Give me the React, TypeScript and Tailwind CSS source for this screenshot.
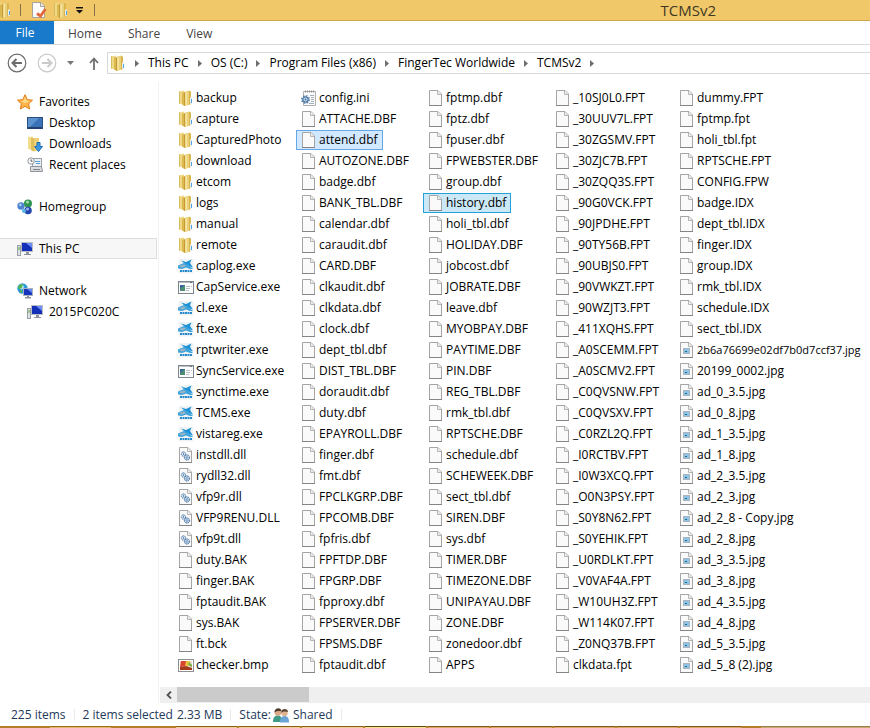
import React from "react";

type Kind = "folder" | "app" | "window" | "dll" | "file" | "bmp" | "ini" | "jpg";
type Entry = { name: string; kind: Kind; mark?: "selected" | "focused" };

const entries = (kind: Kind, names: string): Entry[] =>
  names.split("|").map((name) => ({ name, kind }));

const columns: Entry[][] = [
  [
    ...entries("folder", "backup|capture|CapturedPhoto|download|etcom|logs|manual|remote"),
    ...entries("app", "caplog.exe"),
    ...entries("window", "CapService.exe"),
    ...entries("app", "cl.exe|ft.exe|rptwriter.exe"),
    ...entries("window", "SyncService.exe"),
    ...entries("app", "synctime.exe|TCMS.exe|vistareg.exe"),
    ...entries("dll", "instdll.dll|rydll32.dll|vfp9r.dll|VFP9RENU.DLL|vfp9t.dll"),
    ...entries("file", "duty.BAK|finger.BAK|fptaudit.BAK|sys.BAK|ft.bck"),
    ...entries("bmp", "checker.bmp"),
  ],
  [
    ...entries("ini", "config.ini"),
    ...entries("file", "ATTACHE.DBF"),
    { name: "attend.dbf", kind: "file", mark: "selected" },
    ...entries(
      "file",
      "AUTOZONE.DBF|badge.dbf|BANK_TBL.DBF|calendar.dbf|caraudit.dbf|CARD.DBF|clkaudit.dbf|clkdata.dbf|clock.dbf|dept_tbl.dbf|DIST_TBL.DBF|doraudit.dbf|duty.dbf|EPAYROLL.DBF|finger.dbf|fmt.dbf|FPCLKGRP.DBF|FPCOMB.DBF|fpfris.dbf|FPFTDP.DBF|FPGRP.DBF|fpproxy.dbf|FPSERVER.DBF|FPSMS.DBF|fptaudit.dbf",
    ),
  ],
  [
    ...entries("file", "fptmp.dbf|fptz.dbf|fpuser.dbf|FPWEBSTER.DBF|group.dbf"),
    { name: "history.dbf", kind: "file", mark: "focused" },
    ...entries(
      "file",
      "holi_tbl.dbf|HOLIDAY.DBF|jobcost.dbf|JOBRATE.DBF|leave.dbf|MYOBPAY.DBF|PAYTIME.DBF|PIN.DBF|REG_TBL.DBF|rmk_tbl.dbf|RPTSCHE.DBF|schedule.dbf|SCHEWEEK.DBF|sect_tbl.dbf|SIREN.DBF|sys.dbf|TIMER.DBF|TIMEZONE.DBF|UNIPAYAU.DBF|ZONE.DBF|zonedoor.dbf|APPS",
    ),
  ],
  entries(
    "file",
    "_10SJ0L0.FPT|_30UUV7L.FPT|_30ZGSMV.FPT|_30ZJC7B.FPT|_30ZQQ3S.FPT|_90G0VCK.FPT|_90JPDHE.FPT|_90TY56B.FPT|_90UBJS0.FPT|_90VWKZT.FPT|_90WZJT3.FPT|_411XQHS.FPT|_A0SCEMM.FPT|_A0SCMV2.FPT|_C0QVSNW.FPT|_C0QVSXV.FPT|_C0RZL2Q.FPT|_I0RCTBV.FPT|_I0W3XCQ.FPT|_O0N3PSY.FPT|_S0Y8N62.FPT|_S0YEHIK.FPT|_U0RDLKT.FPT|_V0VAF4A.FPT|_W10UH3Z.FPT|_W114K07.FPT|_Z0NQ37B.FPT|clkdata.fpt",
  ),
  [
    ...entries(
      "file",
      "dummy.FPT|fptmp.fpt|holi_tbl.fpt|RPTSCHE.FPT|CONFIG.FPW|badge.IDX|dept_tbl.IDX|finger.IDX|group.IDX|rmk_tbl.IDX|schedule.IDX|sect_tbl.IDX",
    ),
    ...entries(
      "jpg",
      "2b6a76699e02df7b0d7ccf37.jpg|20199_0002.jpg|ad_0_3.5.jpg|ad_0_8.jpg|ad_1_3.5.jpg|ad_1_8.jpg|ad_2_3.5.jpg|ad_2_3.jpg|ad_2_8 - Copy.jpg|ad_2_8.jpg|ad_3_3.5.jpg|ad_3_8.jpg|ad_4_3.5.jpg|ad_4_8.jpg|ad_5_3.5.jpg|ad_5_8 (2).jpg",
    ),
  ],
];

function Svg({ children }: { children: React.ReactNode }) {
  return (
    <svg className="size-4 shrink-0" viewBox="0 0 16 16" aria-hidden="true">
      {children}
    </svg>
  );
}

function FolderIcon() {
  return (
    <Svg>
      <path d="M1 1.5 L6 0.5 V14.5 L1 13.5Z" fill="#efd984" />
      <path d="M1 1.5 L2 1.3 V13.7 L1 13.5Z" fill="#d8bb5c" />
      <path d="M4 2.5 H6.5 V16 L4 14.5Z" fill="#dcb950" />
      <path d="M6 2.5 L7 2 V16 L6 15.5Z" fill="#c59b36" />
      <path d="M7 1.5 L12 0.5 V14.5 L7 16Z" fill="#ead07a" />
      <path d="M7.5 2 L9 1.7 V14.8 L7.5 15.3Z" fill="#f5e5a0" />
      <path d="M11 1 L13 1.5 V14 L11 14.7Z" fill="#d9b54c" />
      <path d="M12 7.5 H14 V13.8 H12Z" fill="#e8eef0" />
      <path d="M13.5 9 V13" stroke="#4ea3e0" />
    </Svg>
  );
}

function Page() {
  return (
    <>
      <path d="M1.5 0.5 H10 L13.5 4 V15.5 H1.5Z" fill="#fafafa" stroke="#a5a5a5" />
      <path d="M1 15.5 H14" stroke="#858585" />
      <path d="M9.5 1 V4.5 H13" fill="#fff" stroke="#b5b5b5" />
      <path d="M10.5 1.5 L13 4 H10.5Z" fill="#e2e2e2" />
    </>
  );
}

function KindIcon({ kind }: { kind: Kind }) {
  if (kind === "folder") return <FolderIcon />;
  if (kind === "file")
    return (
      <Svg>
        <Page />
      </Svg>
    );
  if (kind === "jpg")
    return (
      <Svg>
        <Page />
        <rect x="4" y="6" width="7" height="6" fill="#a9b4bd" />
        <rect x="5" y="7" width="5" height="4" fill="#8ec4ea" />
        <path d="M6 9 H8 V10 H6Z" fill="#23687f" />
      </Svg>
    );
  if (kind === "dll")
    return (
      <Svg>
        <Page />
        <circle cx="5.5" cy="7" r="2.2" fill="#d8e6f2" stroke="#3d6d9e" strokeDasharray="1.2 0.6" />
        <circle cx="9" cy="10.5" r="2.6" fill="#c3d8ec" stroke="#2e5f93" strokeDasharray="1.3 0.6" />
        <circle cx="5.5" cy="7" r="0.7" fill="#2e5f93" />
        <circle cx="9" cy="10.5" r="0.9" fill="#fff" stroke="#2e5f93" strokeWidth="0.6" />
      </Svg>
    );
  if (kind === "ini")
    return (
      <Svg>
        <path d="M2.5 1.5 H14.5 V15.5 H2.5Z" fill="#fbfbfb" stroke="#b0b0b0" />
        <path d="M4 1.5 H14" stroke="#8c8c8c" strokeWidth="2" strokeDasharray="1 1" />
        <path d="M9 5.5 H13 M10 7.5 H13 M10 9.5 H13 M10 11.5 H13 M8 13.5 H13" stroke="#9fb0bf" />
        <circle cx="4.5" cy="9.5" r="3.7" fill="none" stroke="#5f89b0" strokeWidth="1.6" strokeDasharray="1.5 1.4" />
        <circle cx="4.5" cy="9.5" r="2.7" fill="#cfe0ef" stroke="#46749f" strokeWidth="1.2" />
        <circle cx="4.5" cy="9.5" r="1" fill="#46749f" />
      </Svg>
    );
  if (kind === "window")
    return (
      <Svg>
        <rect x="0.5" y="2.5" width="15" height="12" fill="#fdfdfd" stroke="#7d858e" />
        <path d="M1 3.5 H15" stroke="#b9c0c8" />
        <path d="M12 3.5 H14" stroke="#6f7780" />
        <rect x="2" y="6" width="5" height="6" fill="#4d8d74" />
        <path d="M2 6 H7 L2 10Z" fill="#35679c" />
        <path d="M8 7.5 H12 M8 9.5 H12 M8 11.5 H11 M13 7.5 H14" stroke="#b9bfc6" />
      </Svg>
    );
  if (kind === "bmp")
    return (
      <Svg>
        <rect x="0.5" y="2.5" width="15" height="12" fill="#fff" stroke="#8f8f8f" />
        <rect x="2" y="4" width="12" height="9" fill="#e9dccb" />
        <path d="M3 4 L9 4 L8 9 L2 10Z" fill="#d9432f" />
        <path d="M8 4 H12 L10 9 H7Z" fill="#eac23f" />
        <path d="M11 5 L14 8 V10 L10 8Z" fill="#79ad3e" />
        <path d="M2 10 L8 9 L14 11 V13 H2Z" fill="#a33a1e" />
      </Svg>
    );
  return (
    <Svg>
      <path d="M0.5 1 H15.5 V15.5 H0.5Z" fill="#f0f3f5" />
      <path d="M3 2.5 L8 4 L13.5 1.5 L12 5 L15 9.5 L9.5 7.5 L4 10 L7 6Z" fill="#1f92d6" />
      <path d="M0 7.5 L6 5 L10 6.5 L15 11 H12 L8 9.5 L4 11 L0 10.5Z" fill="#3fa4dc" />
      <path d="M1 8 L6 6.5 L8 8 L4 9.5Z" fill="#9fb4c2" />
      <path d="M2 13 H14" stroke="#2589cb" strokeWidth="2" strokeDasharray="2 0.5" />
    </Svg>
  );
}

function PcIcon() {
  return (
    <Svg>
      <rect x="4" y="1" width="12" height="10" fill="#b9bec6" />
      <rect x="5" y="2" width="10" height="8" fill="#1430b8" />
      <path d="M9 2 H15 V7Z" fill="#6d8df2" />
      <path d="M9 11 H12 V13 H14 V14 H7 V13 H9Z" fill="#8d949d" />
      <rect x="0.5" y="4.5" width="3" height="10" fill="#dfe3e6" stroke="#9aa0a6" />
      <path d="M2 6 V9" stroke="#4fae3a" />
    </Svg>
  );
}

function StarIcon() {
  return (
    <Svg>
      <path
        d="M8 0.7 L10.2 5.6 L15.5 6.2 L11.6 9.8 L12.7 15 L8 12.4 L3.3 15 L4.4 9.8 L0.5 6.2 L5.8 5.6Z"
        fill="#fcb54a"
        stroke="#e07f1b"
      />
      <path d="M8 3 L9.3 6.6 L13 7 L8 9 L4 7 L6.7 6.6Z" fill="#fddc8f" />
    </Svg>
  );
}

function DesktopIcon() {
  return (
    <Svg>
      <rect x="0" y="2" width="16" height="12" fill="#2a4f80" />
      <rect x="1" y="3" width="14" height="9" fill="#3a72b8" />
      <path d="M1 3 H12 L3 12 H1Z" fill="#5c93cf" />
      <path d="M1 13 H15" stroke="#17345d" />
    </Svg>
  );
}

function DownloadsIcon() {
  return (
    <Svg>
      <path d="M1 1 L6 0.5 V14 L1 13Z" fill="#f2dc8a" />
      <path d="M4 2 H12 V14 L7 15.5 L4 14Z" fill="#ecd078" />
      <path d="M4 2 H7 V15.5 L4 14Z" fill="#dfbd57" />
      <path d="M10 6.5 H13 V10.5 H15.5 L11.5 15.5 L7.5 10.5 H10Z" fill="#3c9be6" stroke="#1d6cb5" />
    </Svg>
  );
}

function RecentIcon() {
  return (
    <Svg>
      <rect x="5.5" y="1.5" width="9" height="9" fill="#e8eef3" stroke="#98a2ab" />
      <path d="M8 4.5 H13 M9 6.5 H13" stroke="#5f9fd0" />
      <path d="M3.5 9.5 H14.5 L15.5 14.5 H3.5Z" fill="#dadde0" stroke="#8e9499" />
      <path d="M6 12.5 H13" stroke="#7f858b" />
      <circle cx="4" cy="4" r="3.2" fill="#fff" stroke="#8f979e" />
      <path d="M4 2.3 V4.2 H5.5" fill="none" stroke="#555" />
    </Svg>
  );
}

function HomegroupIcon() {
  return (
    <Svg>
      <circle cx="4" cy="7" r="3.7" fill="#4d84cf" />
      <circle cx="3.3" cy="5.8" r="1.4" fill="#a9cbf3" />
      <circle cx="11" cy="4.5" r="4" fill="#2f9550" />
      <circle cx="10.5" cy="3" r="1.5" fill="#a5dfb1" />
      <circle cx="11" cy="11.5" r="3.8" fill="#2446ac" />
      <circle cx="10.5" cy="10" r="1.5" fill="#9bb2ee" />
      <circle cx="7" cy="12" r="2" fill="#58b4e2" />
    </Svg>
  );
}

function NetworkIcon() {
  return (
    <Svg>
      <circle cx="5.5" cy="5.5" r="5.2" fill="#2f9ad8" />
      <circle cx="4.5" cy="4" r="2.4" fill="#b5e2f5" />
      <path d="M2 2.5 C4 0.5 6 1 7 2 L5 3 L5 5 L2.5 6 L1 5Z" fill="#58b547" />
      <path d="M2 8 L5 7 L5 10Z" fill="#58b547" />
      <rect x="6" y="5" width="10" height="8" fill="#aab2bd" />
      <rect x="7" y="6" width="8" height="6" fill="#1835bd" />
      <path d="M10 6 H15 V10Z" fill="#6688ef" />
      <path d="M10 13 H12 V14 H14 V15.5 H8 V14 H10Z" fill="#8d949d" />
    </Svg>
  );
}

function PeopleIcon() {
  return (
    <Svg>
      <path d="M0 15 C0 10 2 8.5 5 8.5 C8 8.5 9 11 9 15Z" fill="#3f9a86" />
      <circle cx="5" cy="5.5" r="3.3" fill="#dba987" />
      <path d="M1.5 5.5 C1 0.5 8 -0.5 8.5 4 C6 4 4 3.5 1.5 5.5Z" fill="#4b3a2c" />
      <path d="M7 15.5 C7 11 9 9 11.5 9 C14.5 9 16 11 16 15.5Z" fill="#6aa5d8" />
      <circle cx="11.5" cy="6" r="3.2" fill="#e3b492" />
      <path d="M8.2 6 C7.5 1 15 0.5 15 5 C12.5 4.5 10.5 4 8.2 6Z" fill="#5b4330" />
    </Svg>
  );
}

function ClipIcon() {
  return (
    <Svg>
      <path d="M0.5 0.5 H9 L12.5 4 V15.5 H0.5Z" fill="#fbfbfb" stroke="#a8a39a" />
      <path d="M8.5 0.5 V4.5 H12.5" fill="#e8e8e8" stroke="#a8a39a" />
      <path d="M5 11.5 L8.5 14 L13.5 7" fill="none" stroke="#e2683c" strokeWidth="2.8" />
    </Svg>
  );
}

function Chevron() {
  return (
    <span className="flex w-[22px] shrink-0 justify-center">
      <svg className="h-[7px] w-1" viewBox="0 0 4 7" aria-hidden="true">
        <path d="M0 0 L4 3.5 L0 7Z" fill="#6e6e6e" />
      </svg>
    </span>
  );
}

const places: { label: string; icon: React.ReactNode; child?: boolean; active?: boolean }[][] = [
  [
    { label: "Favorites", icon: <StarIcon /> },
    { label: "Desktop", icon: <DesktopIcon />, child: true },
    { label: "Downloads", icon: <DownloadsIcon />, child: true },
    { label: "Recent places", icon: <RecentIcon />, child: true },
  ],
  [{ label: "Homegroup", icon: <HomegroupIcon /> }],
  [{ label: "This PC", icon: <PcIcon />, active: true }],
  [
    { label: "Network", icon: <NetworkIcon /> },
    { label: "2015PC020C", icon: <PcIcon />, child: true },
  ],
];

const marks = {
  none: "border-transparent",
  selected: "border-[#66a7e8] bg-[#d1e8ff]",
  focused: "border-[#26a0da] bg-[#cbe8f6]",
};

// Names longer than this are set one size smaller so that they fit the column.
const LONG_NAME = 24;

export default function App() {
  return (
    <div className="flex flex-col overflow-hidden bg-white font-['Open_Sans','Noto_Sans',sans-serif] text-xs text-black">
      <header className="flex h-[21px] items-center overflow-hidden border-b border-[#d0a649] bg-[#f0c869]">
        <div className="-ml-1 flex items-center">
          <FolderIcon />
          <span className="ml-2 h-3 w-px bg-[#84714a]" />
          <button aria-label="Properties" className="ml-[11px]">
            <ClipIcon />
          </button>
          <button aria-label="New folder" className="ml-[5px]">
            <FolderIcon />
          </button>
          <button aria-label="Customize toolbar" className="ml-[7px]">
            <svg className="h-[7px] w-[7px]" viewBox="0 0 7 7" aria-hidden="true">
              <path d="M0 0 H7 V1.5 H0Z M0 3 H7 L3.5 6.5Z" fill="#111" />
            </svg>
          </button>
          <span className="ml-[11px] h-3 w-px bg-[#84714a]" />
        </div>
        <h1 className="mr-[154px] ml-auto text-[15px] leading-5 text-[#3f3824]">TCMSv2</h1>
      </header>

      <nav aria-label="Ribbon" className="flex h-6 gap-[26px] border-b border-[#dadbdc] pr-[26px] text-[#444]">
        <button className="-mr-3 w-[54px] bg-[#1979ca] pr-1 text-white">File</button>
        <button className="pt-0.5">Home</button>
        <button className="pt-0.5">Share</button>
        <button className="pt-0.5">View</button>
      </nav>

      <div className="flex items-center pt-[7px] pb-2">
        <button aria-label="Back" className="ml-[7px]">
          <svg className="size-5" viewBox="0 0 20 20" fill="none" stroke="#6c6c6c" aria-hidden="true">
            <circle cx="10" cy="10" r="8.8" strokeWidth="1.2" />
            <path d="M15 10 H6 M9.5 6 L5.5 10 L9.5 14" strokeWidth="2" />
          </svg>
        </button>
        <button aria-label="Forward" className="ml-[10px]">
          <svg className="size-5" viewBox="0 0 20 20" fill="none" stroke="#cacaca" aria-hidden="true">
            <circle cx="10" cy="10" r="8.8" strokeWidth="1.2" />
            <path d="M5 10 H14 M10.5 6 L14.5 10 L10.5 14" strokeWidth="2" />
          </svg>
        </button>
        <button aria-label="Recent locations" className="ml-[10px]">
          <svg className="h-1 w-[7px]" viewBox="0 0 7 4" aria-hidden="true">
            <path d="M0 0 H7 L3.5 4Z" fill="#777" />
          </svg>
        </button>
        <button aria-label="Up" className="ml-[15px]">
          <svg className="h-[13px] w-[10px]" viewBox="0 0 10 13" fill="none" stroke="#707070" strokeWidth="1.8" aria-hidden="true">
            <path d="M5 13 V2 M1 6 L5 1.5 L9 6" />
          </svg>
        </button>
        <div className="ml-2 flex h-[22px] min-w-0 flex-1 items-center border-y border-l border-[#d9d9d9] pl-[2px]">
          <FolderIcon />
          {["This PC", "OS (C:)", "Program Files (x86)", "FingerTec Worldwide", "TCMSv2"].map((part) => (
            <React.Fragment key={part}>
              <Chevron />
              <button className="whitespace-nowrap">{part}</button>
            </React.Fragment>
          ))}
          <Chevron />
        </div>
      </div>

      <main className="flex">
        <nav aria-label="Places" className="flex w-[159px] shrink-0 flex-col gap-[21px] border-r border-[#f2f2f2] pt-[9px] pr-px">
          {places.map((group) => (
            <ul key={group[0].label}>
              {group.map((place) => (
                <li key={place.label}>
                  <button
                    className={`flex h-[21px] w-full items-center gap-[6px] border-y border-r ${
                      place.active ? "border-[#dedede] bg-[#f7f7f7]" : "border-transparent"
                    } ${place.child ? "pl-[27px]" : "pl-[17px]"}`}
                  >
                    {place.icon}
                    {place.label}
                  </button>
                </li>
              ))}
            </ul>
          ))}
        </nav>

        <section aria-label="Files" className="min-w-0 flex-1 pt-[6px]">
          <div className="grid grid-cols-[123px_127px_127px_124px_1fr] overflow-hidden pb-[11px] pl-[14px]">
            {columns.map((column, index) => (
              <ul key={index}>
                {column.map((entry) => (
                  <li key={entry.name} className="flex pb-px">
                    <button
                      className={`flex h-5 items-center gap-[2px] border pr-1 pl-1 whitespace-nowrap ${
                        marks[entry.mark ?? "none"]
                      } ${entry.name.length > LONG_NAME ? "text-[11px]" : "text-xs"}`}
                    >
                      <KindIcon kind={entry.kind} />
                      {entry.name}
                    </button>
                  </li>
                ))}
              </ul>
            ))}
          </div>
          <div className="ml-px flex h-4 bg-[#efefef]">
            <button aria-label="Scroll left" className="flex w-[17px] items-center justify-center">
              <svg className="h-2 w-[6px]" viewBox="0 0 6 8" fill="none" stroke="#505050" strokeWidth="1.8" aria-hidden="true">
                <path d="M5 0.5 L1.5 4 L5 7.5" />
              </svg>
            </button>
            <div className="h-[15px] w-[132px] bg-[#cbcbcb]" />
          </div>
        </section>
      </main>

      <footer className="flex h-[23px] items-center text-[#1e395b]">
        <span className="pl-[11px]">225 items</span>
        <span className="mx-2 h-3 w-px bg-[#e8eaee]" />
        <span>2 items selected</span>
        <span className="ml-1">2.33 MB</span>
        <span className="mx-2 h-3 w-px bg-[#e8eaee]" />
        <span className="mr-[2px]">State:</span>
        <PeopleIcon />
        <span className="ml-1">Shared</span>
        <span className="mx-2 h-3 w-px bg-[#e8eaee]" />
      </footer>

      <div className="flex h-[2px] gap-[2px] bg-[#b37f2a]">
        <div className="w-12" />
        <div className="w-[61px] border-t border-[#9a6a20] bg-[#e2b96c]" />
        <div className="w-[61px]" />
        {["a", "b", "c"].map((id) => (
          <div key={id} className="w-[61px] border-t border-[#8a5c1c] bg-[#efcf93]" />
        ))}
        <div className="w-[61px] border-t border-[#5f4410] bg-[#f7e58c]" />
        {["d", "e", "f", "g", "h"].map((id) => (
          <div key={id} className="w-[61px] border-t border-[#85561d] bg-[#d9a764]" />
        ))}
        <div className="w-4" />
        <div className="flex-1 border-t border-[#9a7c48] bg-[#c6aa72]" />
      </div>
    </div>
  );
}
